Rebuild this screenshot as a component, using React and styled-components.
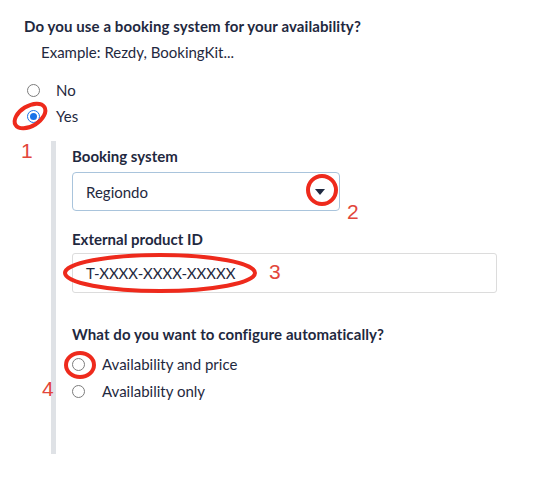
import React from "react";
import styled, { createGlobalStyle } from "styled-components";

const Global = createGlobalStyle`
  html, body { margin: 0; padding: 0; background: #fff; }
  body { font-family: Lato, "Noto Sans", "Liberation Sans", sans-serif; color: #1f2940; }
`;

const Page = styled.div`
  position: relative;
  width: 543px;
  height: 488px;
  box-sizing: border-box;
  padding: 17px 0 0 24px;
`;

const Question = styled.div`
  font-weight: 700;
  font-size: 15px;
  line-height: 18px;
  letter-spacing: 0.1px;
  margin-bottom: ${(p) => p.$mb || 0}px;
`;

const Hint = styled.div`
  font-size: 15px;
  line-height: 18px;
  padding-left: 17px;
  margin-top: 8px;
`;

const RadioList = styled.div`
  display: flex;
  flex-direction: column;
  gap: ${(p) => p.$gap}px;
  margin-top: ${(p) => p.$mt}px;
`;

const RadioRow = styled.label`
  display: flex;
  align-items: center;
  gap: ${(p) => p.$gap}px;
  font-size: 15px;
  line-height: 18px;
  padding-left: ${(p) => p.$indent || 0}px;
`;

const RadioCircle = styled.span`
  width: 13px;
  height: 13px;
  box-sizing: border-box;
  border-radius: 50%;
  border: 1px solid ${(p) => (p.$checked ? "#1a73e8" : "#7c7c7c")};
  background: #fff;
  display: flex;
  align-items: center;
  justify-content: center;
  flex-shrink: 0;
  &::after {
    content: "";
    width: 7px;
    height: 7px;
    border-radius: 50%;
    background: ${(p) => (p.$checked ? "#1a73e8" : "transparent")};
  }
`;

const Nested = styled.div`
  display: flex;
  margin-top: 16px;
  margin-left: 27px;
`;

const Bar = styled.div`
  width: 5px;
  background: #dfe2e6;
  flex-shrink: 0;
`;

const NestedBody = styled.div`
  padding: 6px 0 54px 16px;
  display: flex;
  flex-direction: column;
`;

const FieldLabel = styled.div`
  font-weight: 700;
  font-size: 15px;
  line-height: 18px;
  margin-bottom: ${(p) => p.$mb}px;
`;

const Select = styled.div`
  width: 268px;
  height: 39px;
  box-sizing: border-box;
  border: 1px solid #a9c4dc;
  border-radius: 4px;
  display: flex;
  align-items: center;
  justify-content: space-between;
  padding: 0 13px 0 13px;
  font-size: 15px;
  margin-bottom: 19px;
`;

const Caret = styled.span`
  width: 0;
  height: 0;
  border-left: 5px solid transparent;
  border-right: 5px solid transparent;
  border-top: 6px solid #1f2940;
  margin-right: 1px;
`;

const Input = styled.div`
  width: 425px;
  height: 40px;
  box-sizing: border-box;
  border: 1px solid #dcdcdc;
  border-radius: 3px;
  display: flex;
  align-items: center;
  padding-left: 13px;
  font-size: 15px;
  margin-bottom: 32px;
`;

const Overlay = styled.svg`
  position: absolute;
  left: 0;
  top: 0;
  pointer-events: none;
`;

const Num = styled.text`
  font-family: "Liberation Sans", Arial, sans-serif;
  font-size: 21px;
  fill: #e2463b;
`;

function Radio({ checked, label, gap, indent }) {
  return (
    <RadioRow $gap={gap} $indent={indent}>
      <RadioCircle $checked={checked} />
      <span>{label}</span>
    </RadioRow>
  );
}

export default function App() {
  return (
    <>
      <Global />
      <Page>
        <Question>Do you use a booking system for your availability?</Question>
        <Hint>Example: Rezdy, BookingKit...</Hint>
        <RadioList $gap={8} $mt={20}>
          <Radio label="No" gap={16} indent={3} />
          <Radio label="Yes" checked gap={16} indent={3} />
        </RadioList>
        <Nested>
          <Bar />
          <NestedBody>
            <FieldLabel $mb={7}>Booking system</FieldLabel>
            <Select>
              <span>Regiondo</span>
              <Caret />
            </Select>
            <FieldLabel $mb={5}>External product ID</FieldLabel>
            <Input>T-XXXX-XXXX-XXXXX</Input>
            <Question $mb={12}>What do you want to configure automatically?</Question>
            <RadioList $gap={9} $mt={0}>
              <Radio label="Availability and price" gap={17} indent={0} />
              <Radio label="Availability only" gap={17} indent={0} />
            </RadioList>
          </NestedBody>
        </Nested>
        <Overlay width="543" height="488" viewBox="0 0 543 488">
          <g fill="none" stroke="#ee2a1c" strokeWidth="4">
            <ellipse cx="30" cy="116" rx="17" ry="10" transform="rotate(-32 30 116)" />
            <circle cx="322" cy="190" r="14" />
            <ellipse cx="160" cy="273" rx="95" ry="18" />
            <ellipse cx="80" cy="365" rx="14" ry="12" />
          </g>
          <Num x="21" y="158">1</Num>
          <Num x="347" y="219">2</Num>
          <Num x="269" y="279">3</Num>
          <Num x="42" y="396">4</Num>
        </Overlay>
      </Page>
    </>
  );
}
